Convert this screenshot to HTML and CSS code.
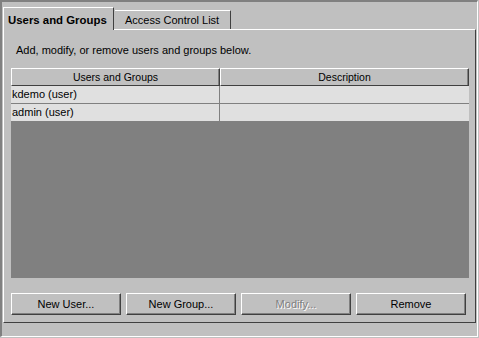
FILE: index.html
```html
<!DOCTYPE html>
<html lang="en">
<head>
    <meta charset="UTF-8">
    <title>Users and Groups</title>
    <link rel="stylesheet" href="styles.css">
</head>
<body>
    <div class="window">
        <div class="tabs">
            <div class="tab selected">Users and Groups</div>
            <div class="tab">Access Control List</div>
        </div>
        <div class="panel">
            <p class="hint">Add, modify, or remove users and groups below.</p>
            <div class="table">
                <div class="head">
                    <div class="th">Users and Groups</div>
                    <div class="th">Description</div>
                </div>
                <div class="row">
                    <div class="td">kdemo (user)</div>
                    <div class="td"></div>
                </div>
                <div class="row">
                    <div class="td">admin (user)</div>
                    <div class="td"></div>
                </div>
                <div class="empty"></div>
            </div>
            <div class="buttons">
                <button class="btn">New User...</button>
                <button class="btn">New Group...</button>
                <button class="btn" disabled>Modify...</button>
                <button class="btn">Remove</button>
            </div>
        </div>
    </div>
</body>
</html>
```

FILE: styles.css
```css
body {
    margin: 0;
    background: #c0c0c0;
    font-family: "Liberation Sans", Arial, sans-serif;
    font-size: 11px;
    color: #000;
}

.window {
    box-sizing: border-box;
    width: 478px;
    height: 337px;
    border-top: 2px solid #808080;
    border-left: 2px solid #808080;
    border-right: 1px solid #fff;
    border-bottom: 1px solid #fff;
}

.tabs {
    display: flex;
    align-items: flex-end;
    height: 27px;
    margin-left: 1px;
}

.tab {
    box-sizing: border-box;
    width: 116px;
    height: 19px;
    padding-left: 10px;
    line-height: 18px;
    white-space: nowrap;
    border-top: 1px solid #fff;
    border-right: 1px solid #404040;
    background: #c0c0c0;
}

.tab.selected {
    position: relative;
    z-index: 1;
    width: 111px;
    height: 23px;
    margin-bottom: -1px;
    margin-right: 1px;
    padding: 3px 0 0 4px;
    border-left: 1px solid #fff;
    font-size: 11.4px;
    font-weight: bold;
}

.panel {
    box-sizing: border-box;
    height: 294px;
    margin: 0 1px;
    border-top: 1px solid #fff;
    border-left: 1px solid #fff;
    border-right: 1px solid #404040;
    border-bottom: 1px solid #404040;
    padding: 14px 6px 7px 7px;
}

.hint {
    margin: 0 0 11px 5px;
    line-height: 13px;
}

.table {
    display: flex;
    flex-direction: column;
    height: 210px;
}

.head, .row {
    display: grid;
    grid-template-columns: 209px 1fr;
}

.th {
    box-sizing: border-box;
    height: 18px;
    line-height: 16px;
    text-align: center;
    font-size: 10.5px;
    border-top: 1px solid #fff;
    border-left: 1px solid #fff;
    border-right: 1px solid #404040;
    border-bottom: 1px solid #404040;
    box-shadow: inset -1px 0 0 #808080;
}

.td {
    box-sizing: border-box;
    height: 18px;
    line-height: 17px;
    padding-left: 1px;
    background: #e0e0e0;
    border-bottom: 1px solid #808080;
}

.td:first-child {
    border-right: 1px solid #808080;
}

.empty {
    flex: 1;
    background: #808080;
}

.buttons {
    display: grid;
    grid-template-columns: repeat(4, 110px);
    gap: 5px;
    margin-top: 15px;
}

.btn {
    box-sizing: border-box;
    height: 22px;
    padding: 0;
    font-family: inherit;
    font-size: 11px;
    color: #000;
    background: #c0c0c0;
    border-top: 1px solid #fff;
    border-left: 1px solid #fff;
    border-right: 1px solid #404040;
    border-bottom: 1px solid #404040;
    box-shadow: inset -1px -1px 0 #808080;
}

.btn:disabled {
    color: #808080;
    text-shadow: 1px 1px 0 #fff;
}
```
